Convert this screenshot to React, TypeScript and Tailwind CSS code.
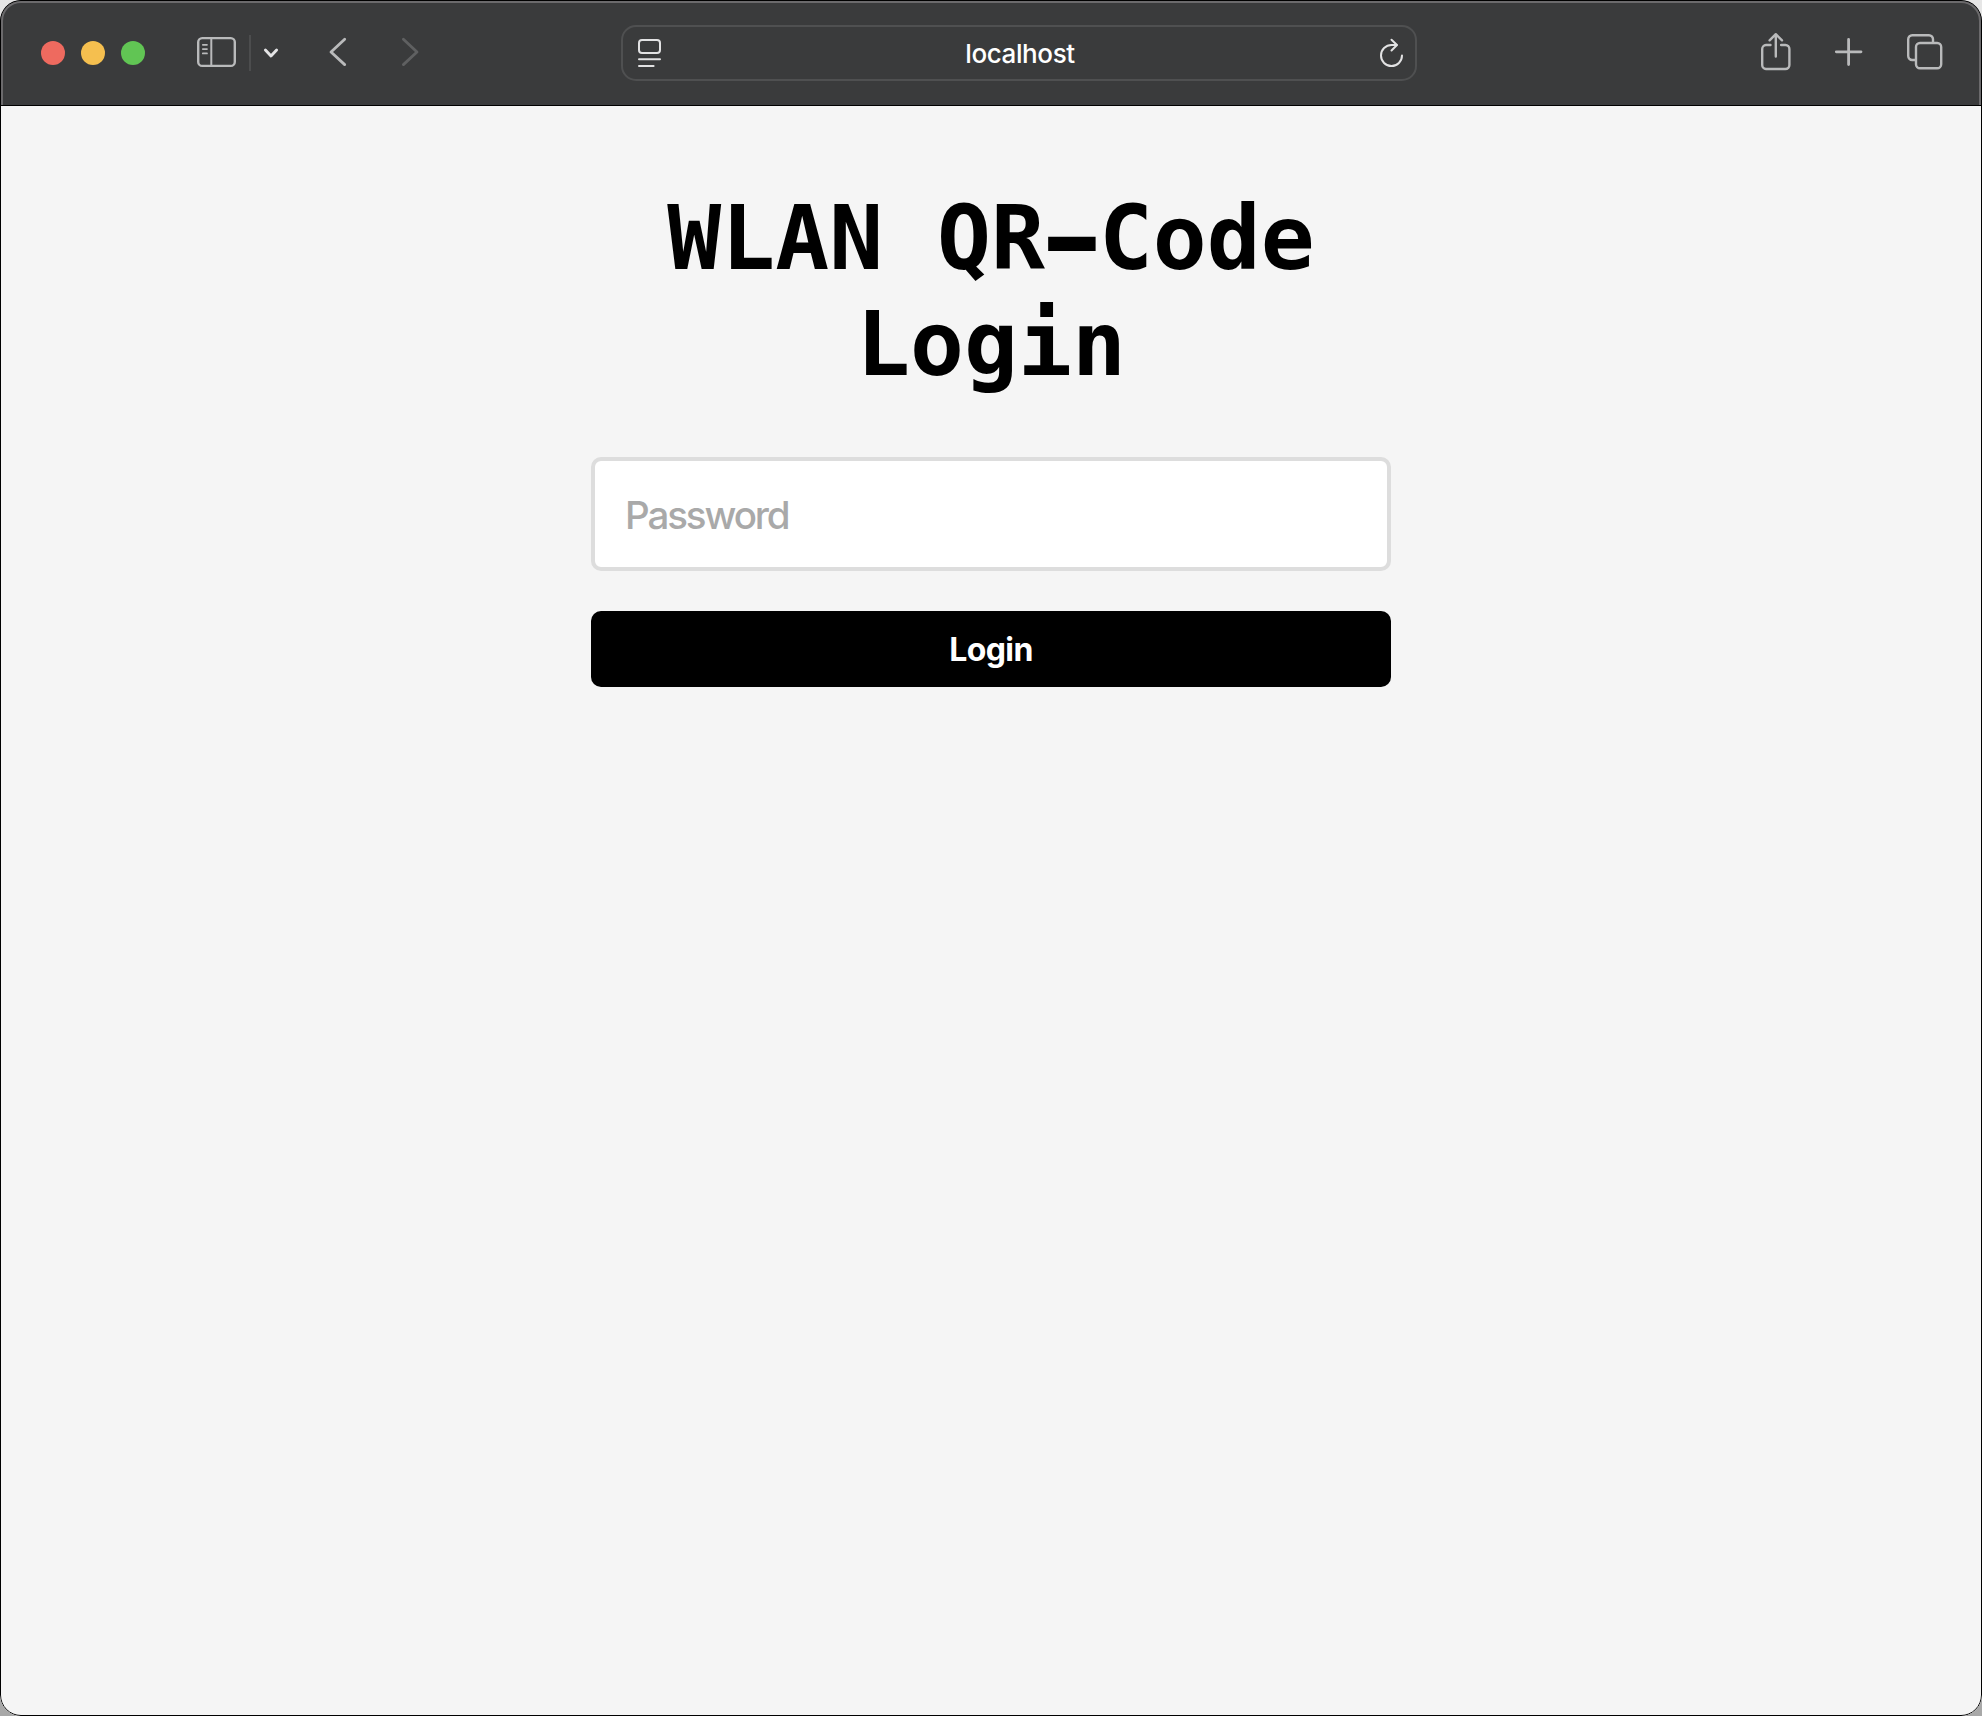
import React from "react";

function SidebarIcon() {
  return (
    <svg width="40" height="32" viewBox="0 0 40 32" fill="none" stroke="#b9babb" className="ml-[52px]">
      <rect x="1.2" y="2.1" width="36.6" height="27.8" rx="4" strokeWidth="2.4" />
      <path d="M14.3 2.5V29.5" strokeWidth="2" />
      <path d="M5.8 8.8H10M5.8 13.1H10M5.8 17.4H10" strokeWidth="1.7" strokeLinecap="round" />
    </svg>
  );
}

function Toolbar() {
  return (
    <header className="flex h-[106px] items-start border-b border-black bg-[#3a3b3c] pl-[41px] pr-[39px]">
      <div className="flex h-[104px] w-[580px] shrink-0 items-center">
        <div className="flex gap-4 pt-[2px]">
          <span className="size-6 rounded-full bg-[#ee6a5f]" />
          <span className="size-6 rounded-full bg-[#f5bf4f]" />
          <span className="size-6 rounded-full bg-[#61c554]" />
        </div>
        <SidebarIcon />
        <span className="ml-[12px] mt-[2px] h-9 w-[2px] bg-[#4c4d4e]" />
        <svg width="16" height="12" viewBox="0 0 16 12" fill="none" className="ml-3 mt-px">
          <path d="M2.4 3L8 9L13.6 3" stroke="#e4e4e5" strokeWidth="2.9" strokeLinecap="round" strokeLinejoin="round" />
        </svg>
        <svg width="20" height="32" viewBox="0 0 20 32" fill="none" className="ml-[49px]">
          <path d="M16.7 3.2L3 16L16.7 28.6" stroke="#b9babb" strokeWidth="2.8" strokeLinecap="round" strokeLinejoin="round" />
        </svg>
        <svg width="20" height="32" viewBox="0 0 20 32" fill="none" className="ml-[52px]">
          <path d="M3.4 3.2L17 16L3.4 28.6" stroke="#5f6061" strokeWidth="2.8" strokeLinecap="round" strokeLinejoin="round" />
        </svg>
      </div>
      <div className="mt-[25px] flex h-14 w-[796px] shrink-0 items-center justify-between rounded-[15px] border-2 border-[#4f5051] pl-3.5 pr-[11px]">
        <svg width="26" height="30" viewBox="0 0 26 30" fill="none" stroke="#e2e2e3" strokeLinecap="round">
          <rect x="2" y="2" width="21" height="12.9" rx="3" strokeWidth="2" />
          <path d="M2 21.3H23M2 28H16.6" strokeWidth="2" />
        </svg>
        <span className="pr-[3px] pt-[2px] font-['Inter',sans-serif] text-[26px] font-[450] leading-8 tracking-[-0.4px] text-white">localhost</span>
        <svg width="24" height="30" viewBox="0 0 24 30" fill="none" stroke="#e2e2e3" strokeWidth="2" strokeLinecap="round" strokeLinejoin="round">
          <path d="M22 17.5A10.5 10.5 0 1 1 11.5 7H16.5" />
          <path d="M11.5 1.8L17 7L11.5 12.5" />
        </svg>
      </div>
      <div className="flex h-[104px] flex-1 items-center justify-end">
        <svg width="32" height="40" viewBox="0 0 32 40" fill="none" stroke="#b9babb" strokeWidth="2.4" strokeLinecap="round" strokeLinejoin="round">
          <path d="M9.5 13H5A4 4 0 0 0 1.2 17V33A4 4 0 0 0 5 37H24.4A4 4 0 0 0 28.4 33V17A4 4 0 0 0 24.4 13H20.1" />
          <path d="M14.8 24.5V2.5M8.6 8.3L14.8 2.2L21 8.3" />
        </svg>
        <svg width="30" height="30" viewBox="0 0 30 30" fill="none" stroke="#b9babb" strokeWidth="2.8" strokeLinecap="round" className="ml-[41px]">
          <path d="M14.6 2.5V27.5M2.3 14.8H27" />
        </svg>
        <svg width="36" height="36" viewBox="0 0 36 36" fill="none" stroke="#b9babb" strokeWidth="2.4" strokeLinejoin="round" className="ml-[43px]">
          <path d="M8.5 26H5.2A4 4 0 0 1 1.2 22V5.2A4 4 0 0 1 5.2 1.2H22A4 4 0 0 1 26 5.2V8.5" />
          <rect x="9" y="9" width="25.2" height="25.2" rx="4" />
        </svg>
      </div>
    </header>
  );
}

export default function App() {
  return (
    <div className="h-[1716px] w-[1982px] bg-linear-to-b from-[#e6e6e6] to-[#a8a8a8]">
      <div className="relative h-full overflow-hidden rounded-[21px] bg-[#f5f5f5]">
        <Toolbar />
        <main className="mx-auto flex w-[800px] flex-col pt-[79px]">
          <h1 className="text-center font-['DejaVu_Sans_Mono',monospace] text-[89.6px] font-bold leading-[106px] text-black">
            WLAN QR<span className="inline-block scale-x-[1.72] scale-y-[1.12]">-</span>Code Login
          </h1>
          <input
            type="password"
            placeholder="Password"
            className="mt-[60px] h-[114px] rounded-[10px] border-4 border-[#dddddd] bg-white pl-[30px] pr-8 pt-[2px] font-['Inter',sans-serif] text-[38.5px] font-[450] tracking-[-2.1px] placeholder:text-[#a9a9a9]"
          />
          <button className="mt-10 h-[76px] rounded-[10px] bg-black pt-px font-['Inter',sans-serif] text-[32px] font-bold tracking-[-0.6px] text-white">
            Login
          </button>
        </main>
        <div className="pointer-events-none absolute inset-0 rounded-[21px] border border-black" />
        <div className="pointer-events-none absolute inset-x-px top-px h-[104px] rounded-t-[20px] border-x-2 border-t-2 border-[#6b6a6c]" />
      </div>
    </div>
  );
}
